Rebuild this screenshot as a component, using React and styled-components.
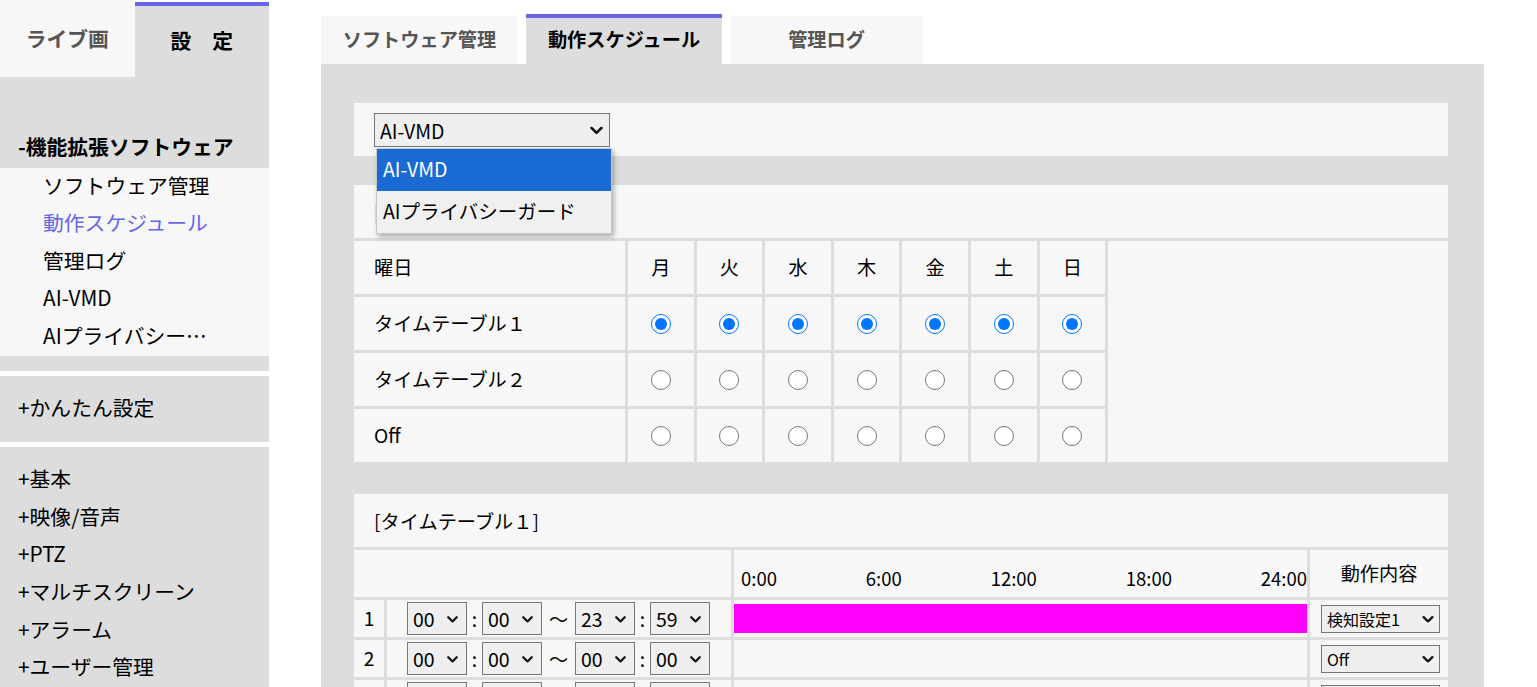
import React from 'react'
import styled, { createGlobalStyle } from 'styled-components'

const GlobalStyle = createGlobalStyle`
  html, body {
    margin: 0;
    padding: 0;
    background: #fff;
    overflow: hidden;
  }
  body {
    font-family: "Noto Sans CJK JP", "Noto Sans", sans-serif;
    color: #000;
  }
`

const Page = styled.div`
  display: flex;
  align-items: flex-start;
`

/* ---------- sidebar ---------- */

const Sidebar = styled.nav`
  width: 269px;
  flex-shrink: 0;
`
const TopTabs = styled.div`
  display: flex;
  height: 77px;
  align-items: flex-end;
`
const TopTab = styled.div`
  box-sizing: border-box;
  flex: 1;
  height: ${p => (p.$active ? '75px' : '77px')};
  display: flex;
  align-items: center;
  justify-content: center;
  padding-bottom: ${p => (p.$active ? '4px' : '2px')};
  font-size: 20.8px;
  font-weight: bold;
  background: ${p => (p.$active ? '#ddd' : '#f7f7f7')};
  color: ${p => (p.$active ? '#000' : '#555')};
  border-top: ${p => (p.$active ? '4px solid #6666e6' : 'none')};
`
const Group = styled.div`
  background: #ddd;
  padding: ${p => p.$pt}px 0 15px;
  & + & {
    margin-top: 5px;
  }
`
const GroupTitle = styled.div`
  padding-left: 18px;
  font-size: 20.8px;
  line-height: 37.6px;
  height: 37.6px;
  font-weight: ${p => (p.$open ? 'bold' : 'normal')};
  white-space: nowrap;
  transform: translateY(-1.5px);
`
const SubList = styled.div`
  background: #f7f7f7;
  margin-top: 1px;
`
const SubItem = styled.div`
  padding-left: 43px;
  font-size: 20.8px;
  line-height: 37.6px;
  height: 37.6px;
  color: ${p => (p.$current ? '#6666e6' : '#000')};
  white-space: nowrap;
  & > span {
    display: inline-block;
    transform: translateY(-1.5px);
  }
`

/* ---------- form controls ---------- */

const SelectWrap = styled.span`
  position: relative;
  display: inline-flex;
  flex-shrink: 0;
`
const NativeSelect = styled.select`
  box-sizing: border-box;
  appearance: none;
  -webkit-appearance: none;
  width: ${p => p.$w}px;
  height: ${p => p.$h}px;
  font-family: inherit;
  font-size: ${p => p.$fs || 19.5}px;
  color: #000;
  background-color: #efefef;
  border: 1px solid #767676;
  border-radius: 0;
  padding: 0 0 0 ${p => p.$pl || 5}px;
  margin: 0;
`
const Chevron = styled.svg`
  position: absolute;
  top: 50%;
  right: ${p => p.$r}px;
  width: ${p => p.$cw}px;
  height: ${p => Math.round(p.$cw * 0.62)}px;
  transform: translateY(-45%);
  pointer-events: none;
`

function SelectBox({ w, h, fs, r = 8, cw = 12, value, options }) {
  return (
    <SelectWrap>
      <NativeSelect $w={w} $h={h} $fs={fs} defaultValue={value}>
        {options.map(o => <option key={o}>{o}</option>)}
      </NativeSelect>
      <Chevron $r={r} $cw={cw} viewBox="0 0 12 7.4" fill="none">
        <path d="M1.4 1.4 L6 6 L10.6 1.4" stroke="#141414" strokeWidth="2.5" strokeLinecap="round" strokeLinejoin="round" />
      </Chevron>
    </SelectWrap>
  )
}

/* ---------- main ---------- */

const Main = styled.main`
  margin-left: 52px;
  width: 1163px;
  flex-shrink: 0;
`
const TabBar = styled.div`
  display: flex;
  align-items: flex-end;
  gap: 8px;
  padding-top: 14px;
`
const Tab = styled.div`
  box-sizing: border-box;
  width: ${p => p.$w}px;
  height: ${p => (p.$active ? '50px' : '48px')};
  display: flex;
  align-items: center;
  justify-content: center;
  padding-bottom: ${p => (p.$active ? '4px' : '2px')};
  font-size: 19.2px;
  font-weight: bold;
  background: ${p => (p.$active ? '#ddd' : '#f7f7f7')};
  color: ${p => (p.$active ? '#000' : '#555')};
  border-top: ${p => (p.$active ? '4px solid #6666e6' : 'none')};
`
const Panel = styled.div`
  background: #ddd;
  padding: 39px 36px 40px 33px;
`
const SelectBar = styled.div`
  position: relative;
  box-sizing: border-box;
  height: 53px;
  padding: 10px 20px;
  background: #f7f7f7;
`
const DropList = styled.div`
  position: absolute;
  left: 22px;
  top: 45px;
  width: 234px;
  background: #f0f0f0;
  border: 1px solid #c8c8c8;
  box-shadow: 2px 3px 5px rgba(0, 0, 0, 0.3);
  z-index: 10;
`
const DropOption = styled.div`
  height: 42px;
  line-height: 40px;
  padding-left: 6px;
  font-size: 19.5px;
  background: ${p => (p.$selected ? '#1a6ad4' : 'transparent')};
  color: ${p => (p.$selected ? '#fff' : '#000')};
`
const Card = styled.section`
  display: flex;
  flex-direction: column;
  gap: 3px;
  margin-top: ${p => p.$mt}px;
`
const CardHead = styled.div`
  height: 53px;
  display: flex;
  align-items: center;
  padding-left: 20px;
  font-size: 19.2px;
  background: #f7f7f7;
`
const DayGrid = styled.div`
  display: grid;
  grid-template-columns: 271px repeat(7, 65.6px) 1fr;
  grid-auto-rows: 53px;
  gap: 3px;
`
const Cell = styled.div`
  background: #f7f7f7;
  display: flex;
  align-items: center;
  justify-content: ${p => (p.$left ? 'flex-start' : 'center')};
  padding-left: ${p => (p.$left ? '20px' : '0')};
  padding-bottom: 2px;
  font-size: 19.2px;
  grid-column: ${p => p.$col || 'auto'};
  grid-row: ${p => p.$row || 'auto'};
`
const Radio = styled.input`
  width: 20px;
  height: 20px;
  margin: 2px 0 0;
`
const TimeGrid = styled.div`
  display: grid;
  grid-template-columns: 30px 344px 1fr 138px;
  grid-template-rows: 47px;
  grid-auto-rows: 37px;
  gap: 3px;
`
const Scale = styled.div`
  background: #f7f7f7;
  display: flex;
  justify-content: space-between;
  align-items: center;
  padding: 8px 0 0 7px;
  font-size: 18.5px;
`
const TimeCell = styled.div`
  background: #f7f7f7;
  display: flex;
  align-items: center;
  padding-left: 20px;
  font-size: 19.2px;
`
const Sep = styled.span`
  width: ${p => p.$w}px;
  text-align: center;
`
const BarCell = styled.div`
  background: #f7f7f7;
  padding: 4px 0;
`
const Bar = styled.div`
  height: 100%;
  background: #ff00ff;
`
const ActionCell = styled.div`
  background: #f7f7f7;
  display: flex;
  align-items: center;
  padding-left: 11px;
`

const days = ['月', '火', '水', '木', '金', '土', '日']
const tables = ['タイムテーブル１', 'タイムテーブル２', 'Off']
const hours = Array.from({ length: 24 }, (_, i) => String(i).padStart(2, '0'))
const mins = Array.from({ length: 60 }, (_, i) => String(i).padStart(2, '0'))
const actions = ['Off', '検知設定1', '検知設定2']

const rows = [
  { n: 1, t: ['00', '00', '23', '59'], bar: true, action: '検知設定1' },
  { n: 2, t: ['00', '00', '00', '00'], bar: false, action: 'Off' },
  { n: 3, t: ['00', '00', '00', '00'], bar: false, action: 'Off' },
  { n: 4, t: ['00', '00', '00', '00'], bar: false, action: 'Off' },
]

function TimeSelect({ value, list }) {
  return <SelectBox w={60} h={33} r={9} cw={11} value={value} options={list} />
}

function App() {
  return (
    <Page>
      <GlobalStyle />
      <Sidebar>
        <TopTabs>
          <TopTab>ライブ画</TopTab>
          <TopTab $active>設　定</TopTab>
        </TopTabs>
        <Group $pt={52}>
          <GroupTitle $open>-機能拡張ソフトウェア</GroupTitle>
          <SubList>
            <SubItem><span>ソフトウェア管理</span></SubItem>
            <SubItem $current><span>動作スケジュール</span></SubItem>
            <SubItem><span>管理ログ</span></SubItem>
            <SubItem><span>AI-VMD</span></SubItem>
            <SubItem><span>AIプライバシー…</span></SubItem>
          </SubList>
        </Group>
        <Group $pt={14}>
          <GroupTitle>+かんたん設定</GroupTitle>
        </Group>
        <Group $pt={14}>
          {['+基本', '+映像/音声', '+PTZ', '+マルチスクリーン', '+アラーム', '+ユーザー管理', '+ネットワーク', '+スケジュール', '+メンテナンス'].map(t => (
            <GroupTitle key={t}>{t}</GroupTitle>
          ))}
        </Group>
      </Sidebar>

      <Main>
        <TabBar>
          <Tab $w={197}>ソフトウェア管理</Tab>
          <Tab $w={196} $active>動作スケジュール</Tab>
          <Tab $w={193}>管理ログ</Tab>
        </TabBar>
        <Panel>
          <SelectBar>
            <SelectBox w={236} h={34} r={7} cw={13} value="AI-VMD" options={['AI-VMD', 'AIプライバシーガード']} />
            <DropList>
              <DropOption $selected>AI-VMD</DropOption>
              <DropOption>AIプライバシーガード</DropOption>
            </DropList>
          </SelectBar>

          <Card $mt={29}>
            <CardHead>[スケジュール]</CardHead>
            <DayGrid>
              <Cell $left>曜日</Cell>
              {days.map(d => <Cell key={d}>{d}</Cell>)}
              <Cell $col="9" $row="1 / span 4" />
              {tables.map((t, r) => (
                <React.Fragment key={t}>
                  <Cell $left>{t}</Cell>
                  {days.map(d => (
                    <Cell key={d}>
                      <Radio type="radio" name={`day-${d}`} defaultChecked={r === 0} />
                    </Cell>
                  ))}
                </React.Fragment>
              ))}
            </DayGrid>
          </Card>

          <Card $mt={32}>
            <CardHead>[タイムテーブル１]</CardHead>
            <TimeGrid>
              <Cell $col="span 2" />
              <Scale>
                <span>0:00</span>
                <span>6:00</span>
                <span>12:00</span>
                <span>18:00</span>
                <span>24:00</span>
              </Scale>
              <Cell>動作内容</Cell>
              {rows.map(row => (
                <React.Fragment key={row.n}>
                  <Cell>{row.n}</Cell>
                  <TimeCell>
                    <TimeSelect value={row.t[0]} list={hours} />
                    <Sep $w={15}>:</Sep>
                    <TimeSelect value={row.t[1]} list={mins} />
                    <Sep $w={33}>～</Sep>
                    <TimeSelect value={row.t[2]} list={hours} />
                    <Sep $w={15}>:</Sep>
                    <TimeSelect value={row.t[3]} list={mins} />
                  </TimeCell>
                  <BarCell>{row.bar && <Bar />}</BarCell>
                  <ActionCell>
                    <SelectBox w={119} h={28} fs={16} r={6} cw={12} value={row.action} options={actions} />
                  </ActionCell>
                </React.Fragment>
              ))}
            </TimeGrid>
          </Card>
        </Panel>
      </Main>
    </Page>
  )
}

export default App
